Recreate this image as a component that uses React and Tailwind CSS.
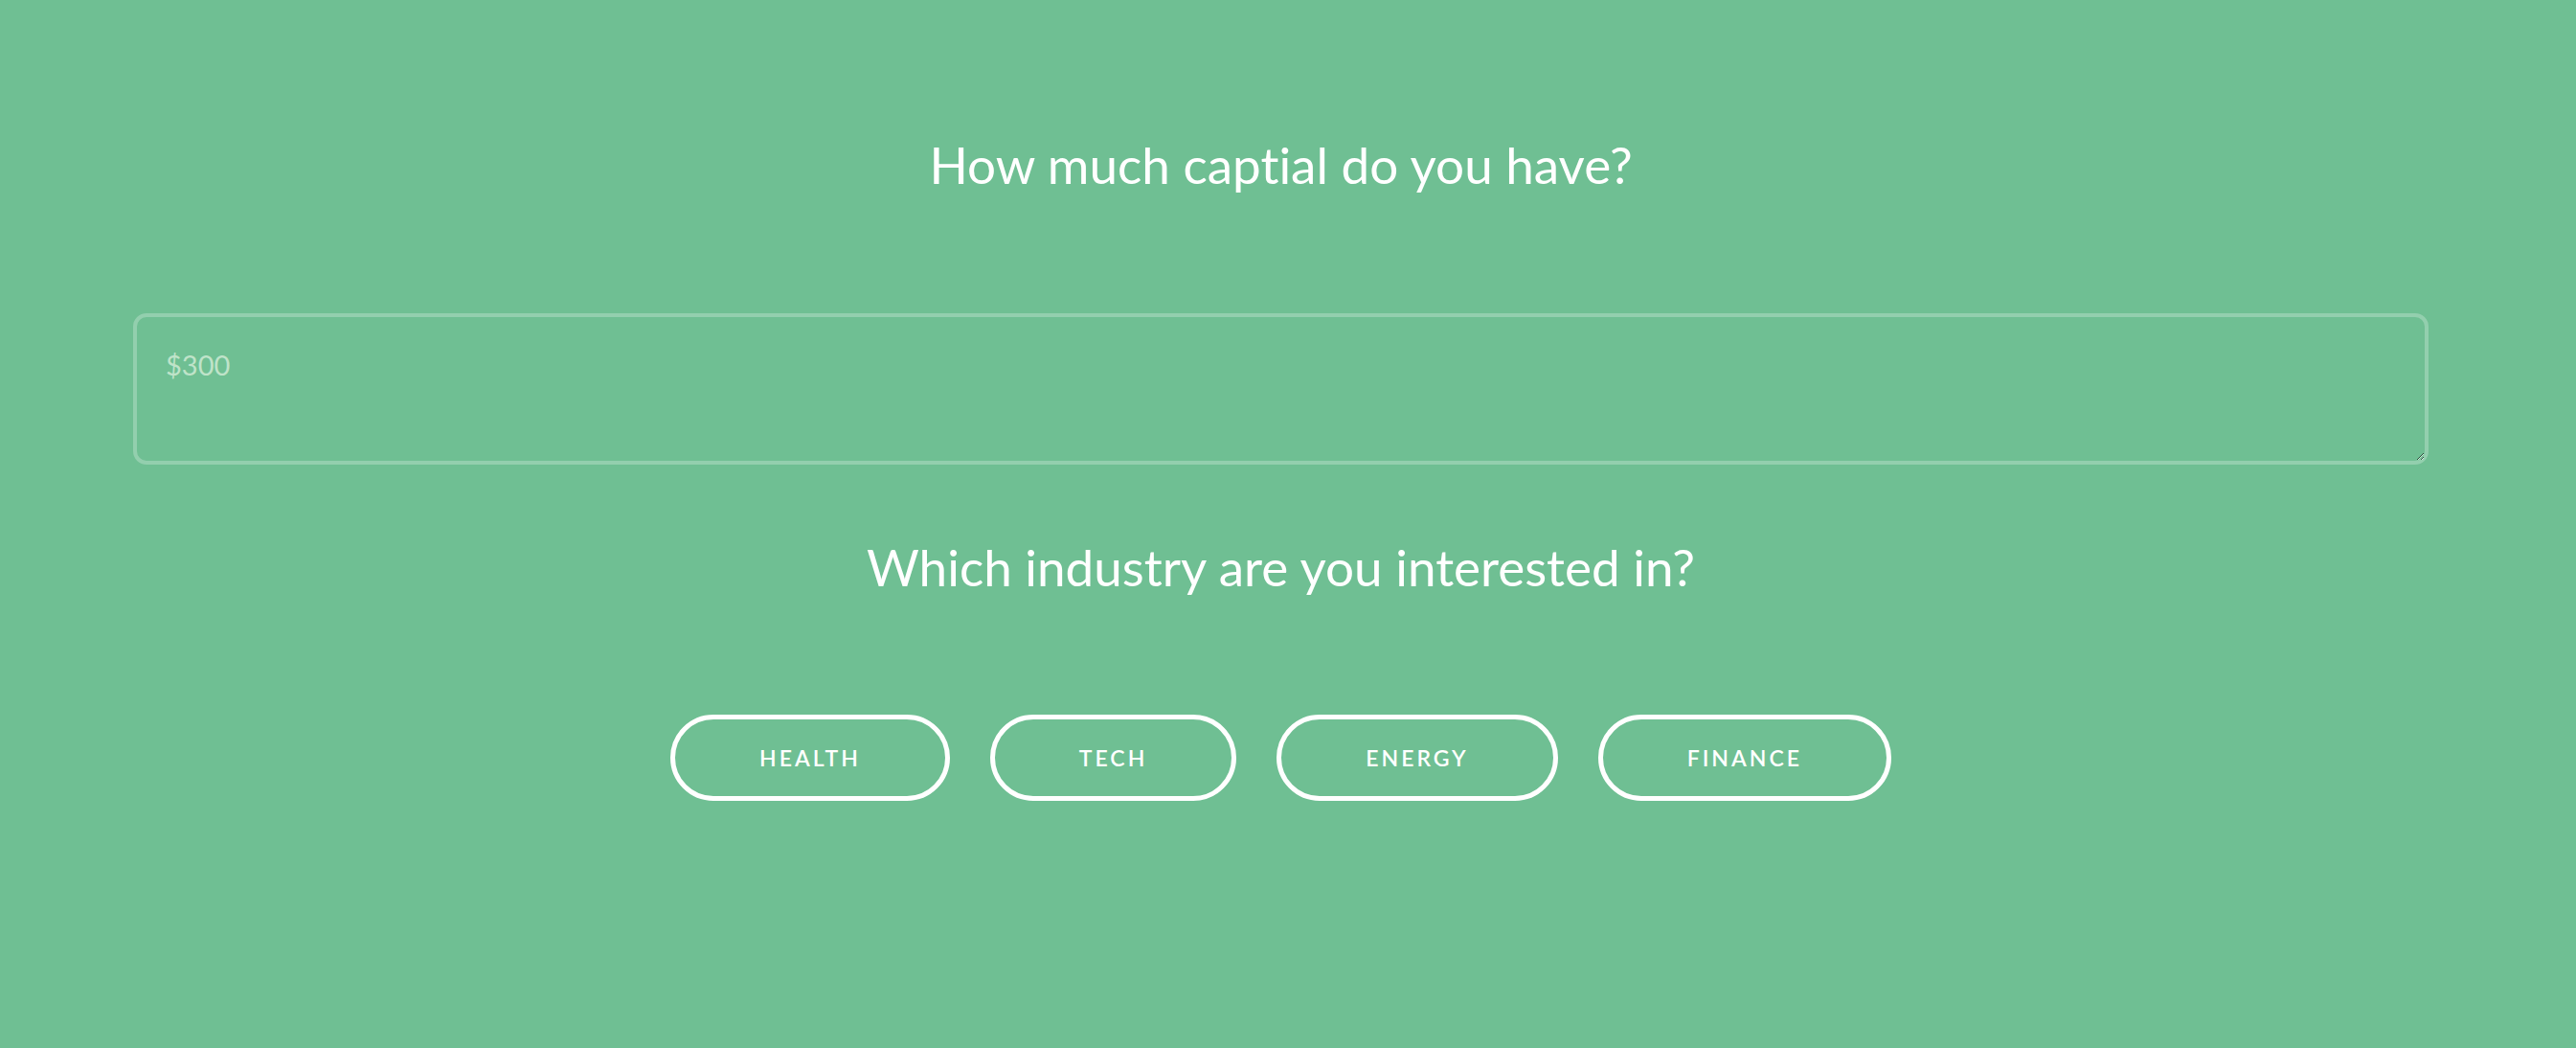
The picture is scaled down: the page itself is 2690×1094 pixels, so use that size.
const INDUSTRIES = ['HEALTH', 'TECH', 'ENERGY', 'FINANCE'];

export default function App() {
  return (
    <div
      className="min-h-[1094px] bg-[#6fbf93] pl-[139px] pr-[154px] pt-[140px] flex flex-col items-center text-white [font-variant-ligatures:none]"
      style={{ fontFamily: 'Lato, "Noto Sans", sans-serif' }}
    >
      {/* Capital */}
      <h1 className="text-[53px] leading-[64px] font-normal">How much captial do you have?</h1>

      <textarea
        placeholder="$300"
        className="mt-[123px] w-full h-[158px] resize rounded-[14px] border-[4px] border-white/25 bg-transparent pl-[30px] pt-[32px] text-[29px] leading-[35px] text-white placeholder:text-[#bfe3c9] outline-none"
      />

      {/* Industry */}
      <h2 className="mt-[75px] text-[53px] leading-[64px] font-normal">Which industry are you interested in?</h2>

      <div className="mt-[122px] flex items-center justify-center gap-[42px]">
        {INDUSTRIES.map((name) => (
          <button
            key={name}
            className="h-[90px] px-[88px] rounded-full border-[5px] border-white text-[23px] font-semibold tracking-[0.13em] text-white"
          >
            {name}
          </button>
        ))}
      </div>
    </div>
  );
}
